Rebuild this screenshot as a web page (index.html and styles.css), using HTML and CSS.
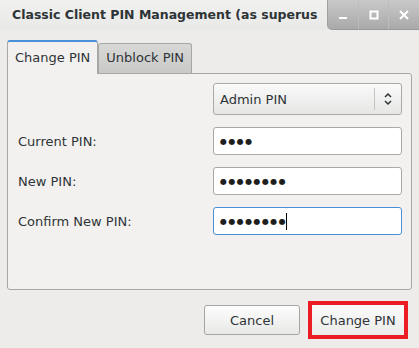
FILE: index.html
```html
<!DOCTYPE html>
<html lang="en">
<head>
    <meta charset="UTF-8">
    <title>Classic Client PIN Management</title>
    <link rel="stylesheet" href="styles.css">
</head>
<body>
    <div id="window">
        <div class="titlebar">
            <div class="title">Classic Client PIN Management (as superus</div>
            <div class="wm-buttons">
                <span class="wm-btn">
                    <svg width="10" height="10" viewBox="0 0 10 10"><rect x="1" y="7" width="8" height="2" fill="#fff"/></svg>
                </span>
                <span class="wm-btn">
                    <svg width="10" height="10" viewBox="0 0 10 10"><rect x="1.5" y="1.5" width="7" height="7" fill="none" stroke="#fff" stroke-width="2"/></svg>
                </span>
                <span class="wm-btn">
                    <svg width="10" height="10" viewBox="0 0 10 10"><path d="M1 1 L9 9 M9 1 L1 9" stroke="#fff" stroke-width="2"/></svg>
                </span>
            </div>
        </div>

        <div class="content">
            <div class="tabs">
                <div class="tab active">Change PIN</div>
                <div class="tab">Unblock PIN</div>
            </div>
            <div class="panel">
                <div class="form">
                    <span></span>
                    <div class="combo">
                        <span class="combo-text">Admin PIN</span>
                        <span class="combo-arrow">
                            <svg width="10" height="14" viewBox="0 0 10 14"><path d="M2 5 L5 2 L8 5 M2 9 L5 12 L8 9" fill="none" stroke="#2e3436" stroke-width="1.5"/></svg>
                        </span>
                    </div>

                    <label>Current PIN:</label>
                    <div class="entry">&#9679;&#9679;&#9679;&#9679;</div>

                    <label>New PIN:</label>
                    <div class="entry">&#9679;&#9679;&#9679;&#9679;&#9679;&#9679;&#9679;&#9679;</div>

                    <label>Confirm New PIN:</label>
                    <div class="entry focused">&#9679;&#9679;&#9679;&#9679;&#9679;&#9679;&#9679;&#9679;<span class="caret"></span></div>
                </div>
            </div>

            <div class="actions">
                <button class="btn">Cancel</button>
                <div class="highlight">
                    <button class="btn">Change PIN</button>
                </div>
            </div>
        </div>
    </div>
</body>
</html>
```

FILE: styles.css
```css
* {
    box-sizing: border-box;
}

body {
    margin: 0;
    font-family: 'DejaVu Sans', 'Open Sans', sans-serif;
    font-size: 13px;
    color: #2e3436;
    background: #ededeb;
}

#window {
    width: 419px;
    height: 348px;
    overflow: hidden;
    background: #edecea;
}

.titlebar {
    height: 30px;
    display: flex;
    background: linear-gradient(#f0f0ef, #e9e9e8);
}

.title {
    flex: 1;
    padding: 7px 0 0 12px;
    font-size: 12.5px;
    font-weight: bold;
    color: #2e3436;
    white-space: nowrap;
}

.wm-buttons {
    display: flex;
    width: 92px;
    height: 30px;
    background: linear-gradient(#c9c9c9, #a9a9a9);
    border-bottom-left-radius: 5px;
    border-left: 1px solid #a0a0a0;
    border-bottom: 1px solid #9a9a9a;
}

.wm-btn {
    flex: 1;
    display: flex;
    align-items: center;
    justify-content: center;
    border-left: 1px solid #bdbdbd;
}

.wm-btn:first-child {
    border-left: none;
}

.content {
    padding: 10px 7px 0 7px;
}

.tabs {
    display: flex;
    align-items: flex-end;
    height: 33px;
    position: relative;
    z-index: 1;
}

.tab {
    height: 30px;
    padding: 6px 7px 0 7px;
    background: linear-gradient(#d8d8d7, #c9c9c8);
    border: 1px solid #a7a7a6;
    border-bottom: none;
    border-radius: 3px 3px 0 0;
    color: #2e3436;
}

.tab.active {
    height: 34px;
    padding: 8px 7px 0 7px;
    background: #f2f1f0;
    border-top: 2px solid #4a90d9;
    margin-bottom: -1px;
}

.panel {
    height: 217px;
    background: #f2f1f0;
    border: 1px solid #a7a7a6;
    border-radius: 0 3px 3px 3px;
    padding: 9px 9px 0 9px;
}

.form {
    display: grid;
    grid-template-columns: 196px 1fr;
    row-gap: 12px;
    align-items: center;
}

.form label {
    padding-left: 1px;
}

.combo {
    height: 32px;
    display: flex;
    align-items: center;
    background: linear-gradient(#fafafa, #e6e6e5);
    border: 1px solid #a9a9a8;
    border-radius: 3px;
}

.combo-text {
    flex: 1;
    padding-left: 6px;
}

.combo-arrow {
    width: 27px;
    height: 22px;
    display: flex;
    align-items: center;
    justify-content: center;
    border-left: 1px solid #c4c4c3;
}

.entry {
    height: 28px;
    display: flex;
    align-items: center;
    padding-left: 6px;
    background: #fff;
    border: 1px solid #a9a9a8;
    border-radius: 3px;
    font-family: 'DejaVu Sans', sans-serif;
    font-size: 8px;
    letter-spacing: 1.4px;
    color: #1e1e1e;
}

.entry.focused {
    border-color: #4a90d9;
}

.caret {
    display: inline-block;
    width: 1px;
    height: 17px;
    background: #000;
    margin-left: -1px;
}

.actions {
    display: flex;
    justify-content: flex-end;
    align-items: center;
    gap: 8px;
    padding: 11px 4px 0 0;
}

.btn {
    height: 30px;
    font-family: inherit;
    font-size: 13px;
    color: #2e3436;
    background: linear-gradient(#fdfdfd, #e8e8e7);
    border: 1px solid #a5a5a4;
    border-radius: 3px;
    padding: 0;
}

.actions > .btn {
    width: 96px;
}

.highlight {
    border: 4px solid #ec1c24;
    padding: 0;
}

.highlight .btn {
    width: 92px;
    border: none;
    border-radius: 0;
    background: linear-gradient(#fbfbfb, #ebebea);
}
```
